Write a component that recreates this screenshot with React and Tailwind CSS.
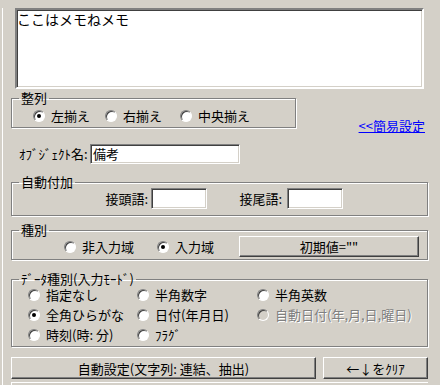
import React from "react";

const FONT = "font-['Noto_Sans_CJK_JP',sans-serif]";

// 凹んだ枠 (入力欄など)
const sunken =
  "border border-t-[#808080] border-l-[#808080] border-r-white border-b-white shadow-[inset_1px_1px_0_#404040,inset_-1px_-1px_0_#d4d0c8]";
// 出っ張った枠 (ボタン)
const raised =
  "border border-t-white border-l-white border-r-[#404040] border-b-[#404040] shadow-[inset_-1px_-1px_0_#808080]";

function Radio({ checked, disabled, label, className = "" }) {
  return (
    <div className={`flex items-center h-full ${className}`}>
      <div
        className={`w-3 h-3 shrink-0 rounded-full border border-t-[#808080] border-l-[#808080] border-r-white border-b-white flex items-center justify-center shadow-[inset_1px_1px_0_#404040] ${disabled ? "bg-[#d4d0c8]" : "bg-white"}`}
      >
        {checked && <div className="w-1 h-1 rounded-full bg-black" />}
      </div>
      <span
        className={`ml-[6px] whitespace-nowrap ${disabled ? "text-[#808080] [text-shadow:1px_1px_0_#fff]" : "text-black"}`}
      >
        {label}
      </span>
    </div>
  );
}

function Group({ title, className = "", children }) {
  return (
    <fieldset
      className={`border border-[#808080] shadow-[inset_1px_1px_0_#fff,1px_1px_0_#fff] m-0 p-0 min-w-0 ${className}`}
    >
      <legend className="ml-[7px] px-[2px] leading-[12px] text-[13px]">{title}</legend>
      {children}
    </fieldset>
  );
}

export default function App() {
  return (
    <div className={`w-[440px] h-[385px] overflow-hidden bg-[#d4d0c8] pl-[2px] text-[13px] text-black ${FONT}`}>
      <div className="h-full border-l border-white pl-[8px] pr-[12px]">
        {/* メモ欄 */}
        <div className={`mt-[8px] ml-[4px] w-[409px] h-[81px] bg-white ${sunken} border-2 border-t-[#808080] border-l-[#404040] text-[14px] leading-[18px]`}>
          <div className="pl-0 pt-0">ここはメモねメモ</div>
        </div>

        {/* 整列 + リンク */}
        <div className="flex items-start mt-[3px]">
          <Group title="整列" className="w-[285px]">
            <div className="flex h-[15px] mt-[4px] mb-[4px] pl-[21px]">
              <Radio checked label="左揃え" className="w-[72px]" />
              <Radio label="右揃え" className="w-[75px]" />
              <Radio label="中央揃え" />
            </div>
          </Group>
          <a href="#" className="ml-auto mr-[3px] mt-[26px] leading-[15px] text-[#0000ff] underline">
            &lt;&lt;簡易設定
          </a>
        </div>

        {/* オブジェクト名 */}
        <div className="flex items-center mt-[11px] h-[20px]">
          <span className="w-[79px] pl-[8px] whitespace-nowrap">ｵﾌﾞｼﾞｪｸﾄ名:</span>
          <div className={`w-[150px] h-[20px] bg-white ${sunken} pl-[2px] leading-[17px]`}>備考</div>
        </div>

        {/* 自動付加 */}
        <Group title="自動付加" className="mt-[12px]">
          <div className="flex items-center h-[21px] mb-[6px] pl-[76px]">
            <span className="w-[60px] text-right whitespace-nowrap">接頭語:</span>
            <div className={`ml-[3px] w-[56px] h-[21px] bg-white ${sunken}`} />
            <span className="w-[75px] text-right whitespace-nowrap">接尾語:</span>
            <div className={`ml-[5px] w-[56px] h-[21px] bg-white ${sunken}`} />
          </div>
        </Group>

        {/* 種別 */}
        <Group title="種別" className="mt-[8px]">
          <div className="flex items-center h-[21px] mb-[2px] pl-[52px]">
            <Radio label="非入力域" className="w-[93px]" />
            <Radio checked label="入力域" className="w-[82px]" />
            <button className={`w-[180px] h-[21px] ${raised} bg-[#d4d0c8] leading-[18px]`}>初期値=""</button>
          </div>
        </Group>

        {/* データ種別 */}
        <Group title="ﾃﾞｰﾀ種別(入力ﾓｰﾄﾞ)" className="mt-[13px]">
          <div className="grid grid-cols-[109px_120px_1fr] auto-rows-[20px] pl-[16px] mb-[1px]">
            <Radio label="指定なし" />
            <Radio label="半角数字" />
            <Radio label="半角英数" />
            <Radio checked label="全角ひらがな" />
            <Radio label="日付(年月日)" />
            <Radio disabled label="自動日付(年,月,日,曜日)" />
            <Radio label="時刻(時: 分)" />
            <Radio label="ﾌﾗｸﾞ" />
          </div>
        </Group>

        {/* 下部ボタン */}
        <div className="flex mt-[10px] h-[22px]">
          <button className={`w-[305px] h-full ${raised} bg-[#d4d0c8] leading-[19px]`}>
            自動設定(文字列: 連結、抽出)
          </button>
          <button className={`ml-[7px] flex-1 h-full ${raised} bg-[#d4d0c8] leading-[19px]`}>
            ←↓をｸﾘｱ
          </button>
        </div>

        <div className="mt-[3px] h-[10px] border-t border-l border-white" />
      </div>
    </div>
  );
}
